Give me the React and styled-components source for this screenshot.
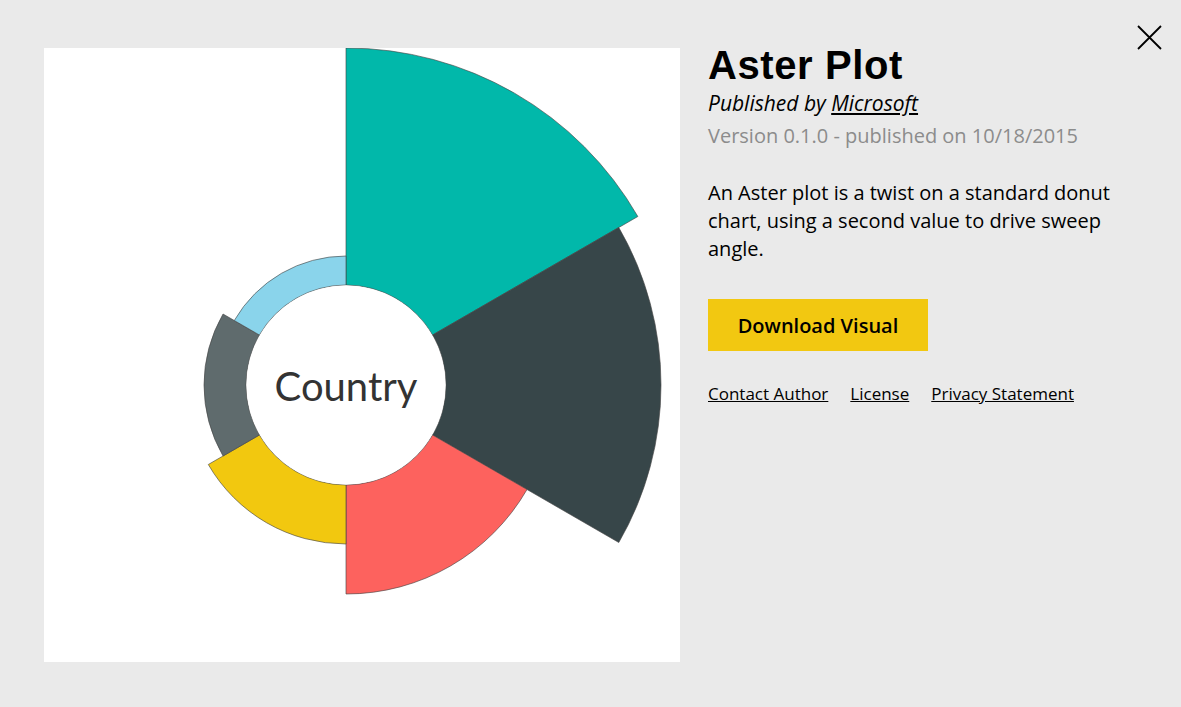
import React from 'react';
import styled, { createGlobalStyle } from 'styled-components';

const GlobalStyle = createGlobalStyle`
  html, body {
    margin: 0;
    padding: 0;
    background-color: #eaeaea;
  }
  body {
    font-family: 'Open Sans', 'Noto Sans', sans-serif;
    color: #000;
  }
`;

const Page = styled.div`
  position: relative;
  width: 1181px;
  height: 707px;
  box-sizing: border-box;
  padding: 43px 0 0 44px;
  display: flex;
  align-items: flex-start;
  gap: 28px;
  background-color: #eaeaea;
  overflow: hidden;
`;

const Preview = styled.div`
  width: 636px;
  height: 614px;
  margin-top: 5px;
  background-color: #fff;
  flex-shrink: 0;
`;

const Info = styled.div`
  width: 420px;
  display: flex;
  flex-direction: column;
`;

const Title = styled.h1`
  margin: 0;
  font-family: 'Liberation Sans', Arial, sans-serif;
  font-weight: 700;
  font-size: 40px;
  line-height: 44px;
  letter-spacing: 0.6px;
`;

const Publisher = styled.div`
  font-style: italic;
  font-size: 21px;
  line-height: 28px;
  margin-top: 2px;

  a {
    color: #000;
    text-decoration: underline;
  }
`;

const Version = styled.div`
  margin-top: 4px;
  font-size: 20px;
  line-height: 30px;
  color: #8c8c8c;
`;

const Description = styled.p`
  margin: 28px 0 0;
  font-size: 20px;
  line-height: 28px;
`;

const DownloadButton = styled.button`
  margin-top: 36px;
  width: 220px;
  height: 52px;
  border: none;
  background-color: #f2c811;
  font-family: 'Open Sans', 'Noto Sans', sans-serif;
  font-size: 20px;
  font-weight: 600;
  color: #000;
  cursor: pointer;
`;

const Links = styled.div`
  margin-top: 31px;
  display: flex;
  gap: 22px;
`;

const TextLink = styled.a`
  font-size: 17px;
  line-height: 24px;
  color: #000;
  text-decoration: underline;
`;

const CloseButton = styled.button`
  position: absolute;
  top: 25px;
  right: 19px;
  width: 25px;
  height: 25px;
  padding: 0;
  border: none;
  background: transparent;
  cursor: pointer;
`;

const CX = 302;
const CY = 337;
const INNER = 100;

const segments = [
  { color: '#01b8aa', r: 337 },
  { color: '#374649', r: 315 },
  { color: '#fd625e', r: 209 },
  { color: '#f2c80f', r: 159 },
  { color: '#5f6b6d', r: 142 },
  { color: '#8ad4eb', r: 129 },
];

const pt = (r, deg) => {
  const a = (deg * Math.PI) / 180;
  return `${(CX + r * Math.sin(a)).toFixed(2)} ${(CY - r * Math.cos(a)).toFixed(2)}`;
};

const arcPath = (r, a0, a1) =>
  `M ${pt(r, a0)} A ${r} ${r} 0 0 1 ${pt(r, a1)} L ${pt(INNER, a1)} A ${INNER} ${INNER} 0 0 0 ${pt(INNER, a0)} Z`;

const AsterChart = () => (
  <svg width="636" height="614" viewBox="0 0 636 614">
    {segments.map((s, i) => (
      <path
        key={i}
        d={arcPath(s.r, i * 60, (i + 1) * 60)}
        fill={s.color}
        stroke="#444"
        strokeOpacity="0.7"
        strokeWidth="0.9"
      />
    ))}
    <circle cx={CX} cy={CY} r={INNER - 0.5} fill="#fff" />
    <text
      x={CX}
      y={CY + 16}
      textAnchor="middle"
      fontFamily="Lato, 'Open Sans', sans-serif"
      fontSize="40"
      fill="#333"
    >
      Country
    </text>
  </svg>
);

export default function App() {
  return (
    <>
      <GlobalStyle />
      <Page>
        <Preview>
          <AsterChart />
        </Preview>
        <Info>
          <Title>Aster Plot</Title>
          <Publisher>
            Published by <a href="#">Microsoft</a>
          </Publisher>
          <Version>Version 0.1.0 - published on 10/18/2015</Version>
          <Description>
            An Aster plot is a twist on a standard donut chart, using a second value to drive sweep angle.
          </Description>
          <DownloadButton>Download Visual</DownloadButton>
          <Links>
            <TextLink href="#">Contact Author</TextLink>
            <TextLink href="#">License</TextLink>
            <TextLink href="#">Privacy Statement</TextLink>
          </Links>
        </Info>
        <CloseButton aria-label="Close">
          <svg width="25" height="25" viewBox="0 0 25 25">
            <path d="M1 1 L24 24 M24 1 L1 24" stroke="#000" strokeWidth="1.8" fill="none" />
          </svg>
        </CloseButton>
      </Page>
    </>
  );
}
